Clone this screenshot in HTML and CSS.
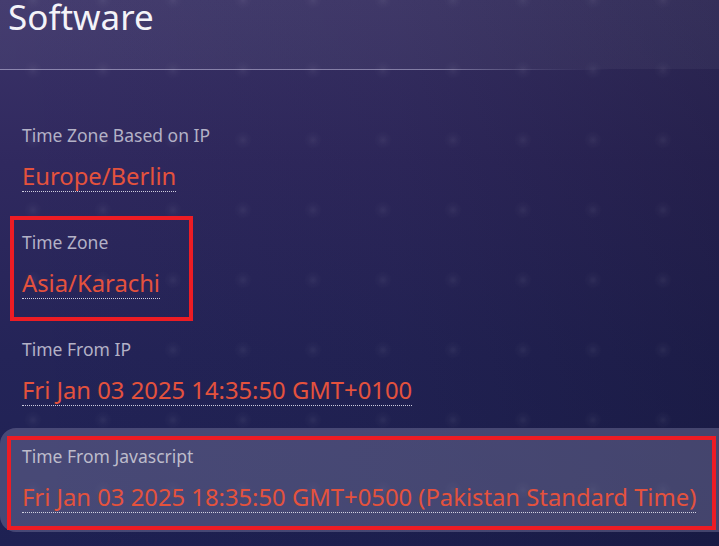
FILE: index.html
```html
<!DOCTYPE html>
<html lang="en">
<head>
<meta charset="utf-8">
<title>Software</title>
<link rel="stylesheet" href="styles.css">
</head>
<body>
<div class="page">
  <header class="header">
    <h1 class="title">Software</h1>
  </header>
  <div class="rule"></div>
  <section class="list">
    <div class="row">
      <div class="label">Time Zone Based on IP</div>
      <div class="value">Europe/Berlin</div>
    </div>
    <div class="row marked-small">
      <div class="label">Time Zone</div>
      <div class="value">Asia/Karachi</div>
    </div>
    <div class="row">
      <div class="label">Time From IP</div>
      <div class="value">Fri Jan 03 2025 14:35:50 GMT+0100</div>
    </div>
    <div class="row active marked-wide">
      <div class="label">Time From Javascript</div>
      <div class="value">Fri Jan 03 2025 18:35:50 GMT+0500 (Pakistan Standard Time)</div>
    </div>
  </section>
</div>
</body>
</html>
```
FILE: styles.css
```css
html, body {
  margin: 0;
  padding: 0;
}
body {
  width: 719px;
  height: 546px;
  overflow: hidden;
  font-family: "Noto Sans", "Open Sans", sans-serif;
  background-color: #262557;
}
.page {
  width: 719px;
  height: 546px;
  overflow: hidden;
  background-image:
    radial-gradient(circle at center, rgba(255,255,255,0.06) 0, rgba(255,255,255,0.025) 4px, rgba(255,255,255,0) 9px),
    linear-gradient(to right, rgba(10,10,30,0) 0%, rgba(10,10,30,0.10) 55%, rgba(8,8,28,0.28) 100%),
    linear-gradient(to bottom, #3b3368 0%, #30295f 30%, #242458 65%, #1e2153 100%);
  background-size: 70px 70px, 100% 100%, 100% 100%;
  background-position: -2px -35px, 0 0, 0 0;
}
.header {
  height: 69px;
  padding-left: 8px;
  box-sizing: border-box;
  background: linear-gradient(to right, rgba(255,255,255,0.05), rgba(255,255,255,0.04));
}
.title {
  margin: 0;
  font-size: 35px;
  font-weight: 400;
  line-height: 34px;
  color: #f4f3f8;
}
.rule {
  height: 1px;
  background: linear-gradient(to right, rgba(210,205,235,0.55) 0%, rgba(210,205,235,0.5) 60%, rgba(210,205,235,0.15) 75%, rgba(210,205,235,0) 85%);
}
.list {
  margin-top: 37px;
  display: flex;
  flex-direction: column;
  gap: 3px;
}
.row {
  position: relative;
  height: 104px;
  box-sizing: border-box;
  padding: 17px 0 0 22px;
  display: flex;
  flex-direction: column;
  align-items: flex-start;
}
.label {
  font-size: 17.5px;
  line-height: 22px;
  color: #b3b1c6;
}
.value {
  margin-top: 15px;
  font-size: 23.8px;
  line-height: 30px;
  color: #e4523d;
  border-bottom: 1px dotted rgba(235,235,245,0.85);
}
.active {
  background: rgba(122,124,162,0.44);
  border-radius: 16px 0 0 16px;
}
.active .label {
  color: #bdbccb;
}
.marked-small::after,
.marked-wide::after {
  content: "";
  position: absolute;
  border: 4px solid #ed1c24;
  pointer-events: none;
}
.marked-small::after {
  top: 2px;
  left: 10px;
  width: 175px;
  height: 97px;
}
.marked-wide::after {
  top: 8px;
  left: 7px;
  right: 3px;
  height: 86px;
}
```
